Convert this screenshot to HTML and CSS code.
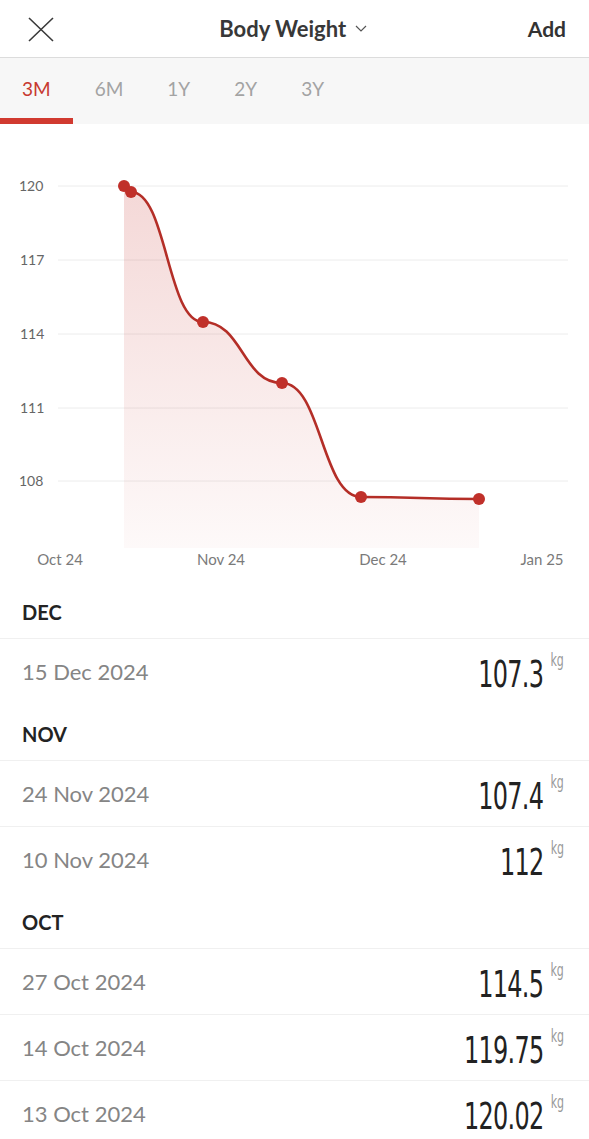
FILE: index.html
```html
<!DOCTYPE html>
<html lang="en">
<head>
    <meta charset="UTF-8">
    <title>Body Weight</title>
    <link rel="stylesheet" href="styles.css">
</head>
<body>

    <header class="topbar">
        <button class="close" type="button">
            <svg width="26" height="25" viewBox="0 0 26 25"><path d="M1 1L25 24M25 1L1 24" stroke="#3a3a3a" stroke-width="1.6" fill="none"/></svg>
        </button>
        <div class="title">Body Weight
            <svg class="chev" width="12" height="7" viewBox="0 0 12 7"><path d="M1 1L6 6L11 1" stroke="#555" stroke-width="1.2" fill="none"/></svg>
        </div>
        <a class="add" href="#">Add</a>
    </header>

    <nav class="tabs">
        <span class="tab active">3M</span>
        <span class="tab">6M</span>
        <span class="tab">1Y</span>
        <span class="tab">2Y</span>
        <span class="tab">3Y</span>
    </nav>

    <section class="chart">
        <svg width="589" height="458" viewBox="0 0 589 458">
            <defs>
                <linearGradient id="fade" x1="0" y1="0" x2="0" y2="1">
                    <stop offset="0" stop-color="#c83c37" stop-opacity="0.2"/>
                    <stop offset="1" stop-color="#c83c37" stop-opacity="0.03"/>
                </linearGradient>
            </defs>
            <!-- grid -->
            <g stroke="#ececec" stroke-width="1">
                <line x1="58" y1="62" x2="568" y2="62"/>
                <line x1="58" y1="136" x2="568" y2="136"/>
                <line x1="58" y1="210" x2="568" y2="210"/>
                <line x1="58" y1="284" x2="568" y2="284"/>
                <line x1="58" y1="357" x2="568" y2="357"/>
            </g>
            <g class="ylab">
                <text x="19" y="67">120</text>
                <text x="20" y="141">117</text>
                <text x="20" y="215">114</text>
                <text x="20" y="289">111</text>
                <text x="19" y="362">108</text>
            </g>
            <g class="xlab" text-anchor="middle">
                <text x="60" y="441">Oct 24</text>
                <text x="221" y="441">Nov 24</text>
                <text x="383" y="441">Dec 24</text>
                <text x="542" y="441">Jan 25</text>
            </g>
            <path d="M124,62 C127.5,62 127.5,68 131,68 C167,68 167,198 203,198 C242.5,198 242.5,259 282,259 C321.5,259 321.5,373 361,373 C420,373 420,375 479,375 L479,424 L124,424 Z" fill="url(#fade)"/>
            <path d="M124,62 C127.5,62 127.5,68 131,68 C167,68 167,198 203,198 C242.5,198 242.5,259 282,259 C321.5,259 321.5,373 361,373 C420,373 420,375 479,375" fill="none" stroke="#b42e27" stroke-width="2.6"/>
            <g fill="#c0302a">
                <circle cx="124" cy="62" r="6"/>
                <circle cx="131" cy="68" r="6"/>
                <circle cx="203" cy="198" r="6"/>
                <circle cx="282" cy="259" r="6"/>
                <circle cx="361" cy="373" r="6"/>
                <circle cx="479" cy="375" r="6"/>
            </g>
        </svg>
    </section>

    <div class="log">
        <h3 class="month">DEC</h3>
        <div class="entry"><span class="date">15 Dec 2024</span><span class="val">107.3<sup>kg</sup></span></div>

        <h3 class="month">NOV</h3>
        <div class="entry"><span class="date">24 Nov 2024</span><span class="val">107.4<sup>kg</sup></span></div>
        <div class="entry"><span class="date">10 Nov 2024</span><span class="val">112<sup>kg</sup></span></div>

        <h3 class="month">OCT</h3>
        <div class="entry"><span class="date">27 Oct 2024</span><span class="val">114.5<sup>kg</sup></span></div>
        <div class="entry"><span class="date">14 Oct 2024</span><span class="val">119.75<sup>kg</sup></span></div>
        <div class="entry"><span class="date">13 Oct 2024</span><span class="val">120.02<sup>kg</sup></span></div>
    </div>

</body>
</html>
```

FILE: styles.css
```css
body{
    margin: 0;
    width: 589px;
    background: #fff;
    font-family: Lato, "Open Sans", sans-serif;
    color: #2b2b2b;
    overflow: hidden;
}
.topbar{
    height: 57px;
    display: flex;
    align-items: center;
    justify-content: space-between;
    border-bottom: 1px solid #dcdcdc;
    padding: 0 23px 0 28px;
}
.close{
    border: none;
    background: none;
    padding: 0;
    width: 26px;
    height: 25px;
    margin-top: 2px;
}
.title{
    font-size: 22px;
    font-weight: 700;
    color: #383838;
    margin-left: 4px;
}
.chev{
    margin-left: 3px;
    vertical-align: 5px;
}
.add{
    font-size: 21px;
    font-weight: 700;
    color: #333;
    text-decoration: none;
}
.tabs{
    height: 66px;
    background: #f7f7f7;
    display: flex;
}
.tab{
    padding: 0 22px;
    display: flex;
    align-items: center;
    padding-bottom: 6px;
    font-size: 19px;
    color: #a3a3a3;
}
.tab.active{
    color: #c73a31;
    box-shadow: inset 0 -6px 0 #d13a30;
}
.chart{
    height: 458px;
}
.chart svg{
    display: block;
}
.ylab text{
    font-size: 14px;
    fill: #666;
}
.xlab text{
    font-size: 15px;
    fill: #7a7a7a;
}
.month{
    margin: 0;
    height: 56px;
    box-sizing: border-box;
    padding: 18px 22px 0;
    font-size: 20px;
    font-weight: 700;
    color: #232323;
}
.entry{
    height: 66px;
    box-sizing: border-box;
    border-top: 1px solid #f0f0f0;
    display: flex;
    align-items: center;
    justify-content: space-between;
    padding: 0 25px 0 22px;
}
.date{
    font-size: 22px;
    color: #858585;
}
.val{
    display: inline-block;
    font-family: "DejaVu Sans Condensed", "DejaVu Sans", sans-serif;
    font-size: 37px;
    color: #222;
    letter-spacing: -1px;
    transform: scaleX(0.72);
    transform-origin: right center;
    margin-top: 2px;
}
.val sup{
    font-size: 17px;
    color: #999;
    margin-left: 10px;
    letter-spacing: 0;
    vertical-align: 21px;
}
```
